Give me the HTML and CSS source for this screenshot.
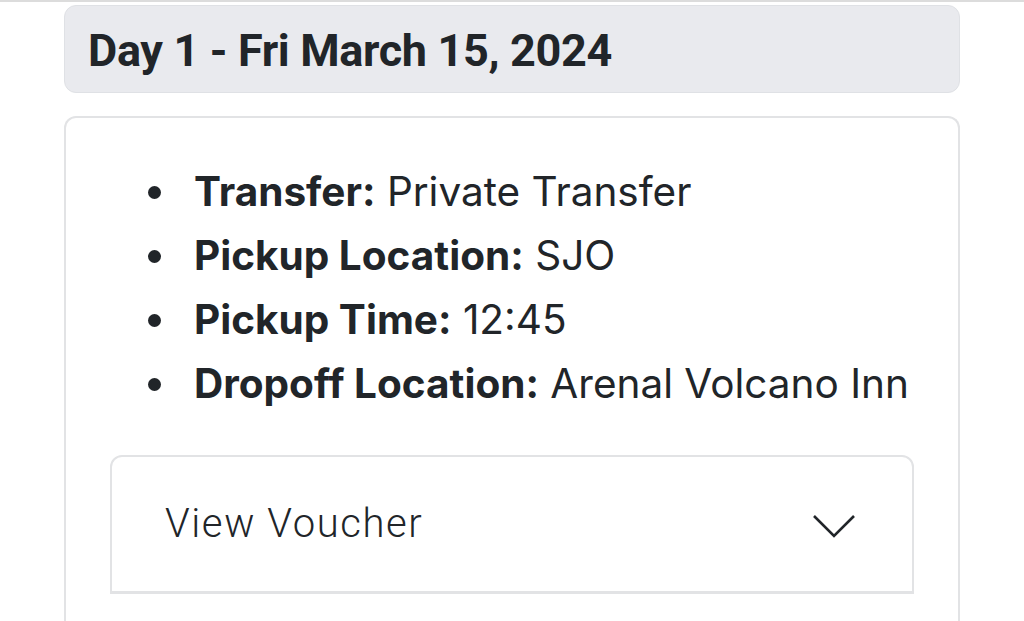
FILE: index.html
```html
<!DOCTYPE html>
<html>
<head>
  <title>Itinerary</title>
  <link rel="stylesheet" href="styles.css">
</head>
<body>
  <div class="page">
    <div class="day-header">
      <h2>Day 1 - Fri March 15, 2024</h2>
    </div>
    <div class="day-card">
      <ul class="details">
        <li><strong>Transfer:</strong> Private Transfer</li>
        <li><strong>Pickup Location:</strong> SJO</li>
        <li><strong>Pickup Time:</strong> 12:45</li>
        <li><strong>Dropoff Location:</strong> Arenal Volcano Inn</li>
      </ul>
      <div class="voucher">
        <span>View Voucher</span>
        <svg class="chevron" width="44" height="26" viewBox="0 0 44 26">
          <path d="M2 2 L22 22 L42 2" fill="none" stroke="#212529" stroke-width="2.6"/>
        </svg>
      </div>
    </div>
  </div>
</body>
</html>
```

FILE: styles.css
```css
html, body {
  margin: 0;
  padding: 0;
  background: #fff;
  overflow: hidden;
}

body {
  font-family: Inter, "Noto Sans", sans-serif;
  color: #212529;
  border-top: 2px solid #dcdcdc;
}

.page {
  width: 896px;
  margin: 3px 0 0 64px;
}

.day-header {
  height: 88px;
  background: #e9eaee;
  border: 1px solid #dfe1e5;
  border-radius: 12px;
  display: flex;
  align-items: center;
  padding-left: 23px;
  box-sizing: border-box;
}

.day-header h2 {
  margin: 2px 0 0 0;
  font-family: Roboto, sans-serif;
  font-weight: 700;
  font-size: 45px;
  letter-spacing: -0.35px;
}

.day-card {
  margin-top: 23px;
  border: 2px solid #e2e3e5;
  border-bottom: none;
  border-radius: 12px 12px 0 0;
  height: 520px;
  box-sizing: border-box;
  padding: 42px 44px 0 44px;
}

.details {
  margin: 0;
  padding-left: 84px;
  list-style: none;
  font-size: 40.5px;
  line-height: 64px;
}

.details li {
  position: relative;
}

.details li::before {
  content: "";
  position: absolute;
  left: -46px;
  top: 26px;
  width: 13px;
  height: 13px;
  border-radius: 50%;
  background: #212529;
}

.details strong {
  font-weight: 700;
}

.voucher {
  margin-top: 39px;
  height: 139px;
  border: 2px solid #e2e3e5;
  border-bottom-width: 3px;
  border-radius: 12px 12px 0 0;
  box-sizing: border-box;
  display: flex;
  align-items: center;
  justify-content: space-between;
  padding: 0 56px 0 53px;
}

.voucher span {
  font-family: Roboto, sans-serif;
  font-weight: 300;
  font-size: 40px;
  letter-spacing: 1.6px;
  margin-bottom: 2px;
}

.chevron {
  margin-top: 6px;
}
```
